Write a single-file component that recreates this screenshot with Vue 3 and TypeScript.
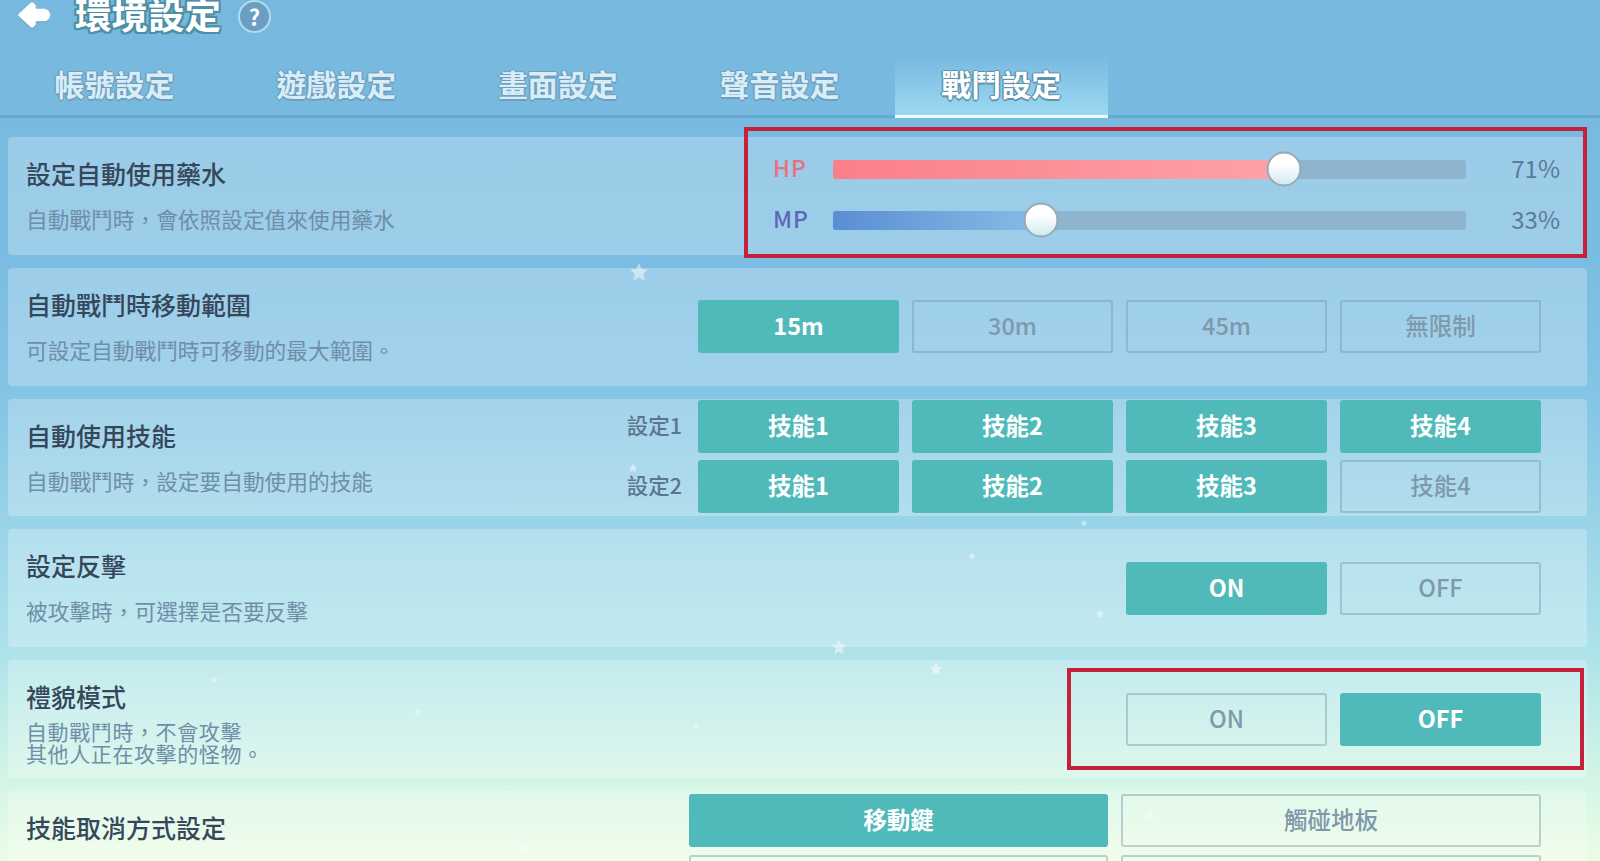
<script setup lang="ts">
const tabs = ['帳號設定', '遊戲設定', '畫面設定', '聲音設定', '戰鬥設定']
const ranges = ['15m', '30m', '45m', '無限制']
const skillSets = [
  { label: '設定1', on: [true, true, true, true] },
  { label: '設定2', on: [true, true, true, false] },
]
const sliders = [
  { key: 'hp', name: 'HP', value: 71, pos: 71.2 },
  { key: 'mp', name: 'MP', value: 33, pos: 32.9 },
]
const stars = [
  { x: 639, y: 272, s: 20, o: 0.5 },
  { x: 839, y: 647, s: 16, o: 0.5 },
  { x: 936, y: 669, s: 14, o: 0.5 },
  { x: 633, y: 468, s: 10, o: 0.5 },
  { x: 972, y: 556, s: 8, o: 0.5 },
  { x: 1100, y: 614, s: 10, o: 0.45 },
  { x: 1084, y: 523, s: 7, o: 0.5 },
  { x: 214, y: 680, s: 9, o: 0.4 },
  { x: 418, y: 712, s: 9, o: 0.4 },
  { x: 696, y: 726, s: 7, o: 0.35 },
  { x: 525, y: 848, s: 12, o: 0.4 },
  { x: 1150, y: 815, s: 14, o: 0.3 },
]
</script>

<template>
  <div class="page">
    <header class="top">
      <div class="title-row">
        <svg class="back" viewBox="0 0 34 30" aria-hidden="true">
          <path
            d="M15 4 L3 15 L15 26 L17 24 V19.5 H27 Q31 19 31.5 15 Q31 11 27 10.5 H17 V6 Z"
            fill="#fff"
            stroke="#fff"
            stroke-width="3.5"
            stroke-linejoin="round"
          />
        </svg>
        <h1 class="title">環境設定</h1>
        <span class="help">?</span>
      </div>
      <nav class="tabs">
        <div v-for="(t, i) in tabs" :key="t" class="tab" :class="{ active: i === 4 }">{{ t }}</div>
      </nav>
    </header>

    <main class="rows">
      <section class="row slider-row">
        <div class="text">
          <div class="name">設定自動使用藥水</div>
          <div class="desc">自動戰鬥時&#xFF0C;會依照設定值來使用藥水</div>
        </div>
        <div class="sliders">
          <div v-for="s in sliders" :key="s.key" class="slider" :class="s.key">
            <span class="s-name">{{ s.name }}</span>
            <div class="track">
              <div class="fill" :style="{ width: s.pos + '%' }"></div>
              <div class="thumb" :style="{ left: s.pos + '%' }"></div>
            </div>
            <span class="s-val">{{ s.value }}%</span>
          </div>
        </div>
      </section>

      <section class="row">
        <div class="text">
          <div class="name">自動戰鬥時移動範圍</div>
          <div class="desc">可設定自動戰鬥時可移動的最大範圍。</div>
        </div>
        <div class="grid">
          <button v-for="(r, i) in ranges" :key="r" class="btn" :class="{ on: i === 0 }">{{ r }}</button>
        </div>
      </section>

      <section class="row">
        <div class="text">
          <div class="name">自動使用技能</div>
          <div class="desc">自動戰鬥時&#xFF0C;設定要自動使用的技能</div>
        </div>
        <div class="skill-sets">
          <div v-for="set in skillSets" :key="set.label" class="skill-line">
            <span class="set-label">{{ set.label }}</span>
            <div class="grid">
              <button v-for="(on, i) in set.on" :key="i" class="btn" :class="{ on }">技能{{ i + 1 }}</button>
            </div>
          </div>
        </div>
      </section>

      <section class="row">
        <div class="text">
          <div class="name">設定反擊</div>
          <div class="desc">被攻擊時&#xFF0C;可選擇是否要反擊</div>
        </div>
        <div class="grid two">
          <button class="btn on">ON</button>
          <button class="btn">OFF</button>
        </div>
      </section>

      <section class="row">
        <div class="text">
          <div class="name">禮貌模式</div>
          <div class="desc tight">自動戰鬥時&#xFF0C;不會攻擊<br />其他人正在攻擊的怪物。</div>
        </div>
        <div class="grid two">
          <button class="btn">ON</button>
          <button class="btn on">OFF</button>
        </div>
      </section>

      <section class="row cancel-row">
        <div class="text">
          <div class="name">技能取消方式設定</div>
        </div>
        <div class="wide-grid">
          <button class="btn on">移動鍵</button>
          <button class="btn">觸碰地板</button>
          <button class="btn"></button>
          <button class="btn"></button>
        </div>
      </section>
    </main>

    <svg
      v-for="(st, i) in stars"
      :key="i"
      class="star"
      viewBox="0 0 20 20"
      :style="{ left: st.x + 'px', top: st.y + 'px', width: st.s + 'px', height: st.s + 'px', opacity: st.o }"
      aria-hidden="true"
    >
      <path d="M10 1 L12.6 7 L19 7.6 L14.2 12 L15.6 18.6 L10 15.2 L4.4 18.6 L5.8 12 L1 7.6 L7.4 7 Z" fill="#fff" />
    </svg>

    <div class="mark mark-a"></div>
    <div class="mark mark-b"></div>
  </div>
</template>

<style>
html,
body {
  margin: 0;
  background: #77b8df;
}
</style>

<style scoped>
.page {
  position: relative;
  width: 1600px;
  height: 861px;
  overflow: hidden;
  font-family: "Noto Sans CJK TC", "Noto Sans", sans-serif;
  background: linear-gradient(
    180deg,
    #77b8df 0%,
    #7bbce2 30%,
    #85c5e5 47%,
    #9bd5e8 62%,
    #aee3ea 76%,
    #d2f5e6 90%,
    #ecfce4 100%
  );
}

.top {
  height: 118px;
  box-sizing: border-box;
  border-bottom: 3px solid #66abd3;
}

.title-row {
  display: flex;
  align-items: center;
  height: 30px;
  margin-bottom: 26px;
  padding-left: 17px;
}

.back {
  width: 34px;
  height: 30px;
  margin-right: 24px;
  filter: drop-shadow(0 1px 0 #6a9dbb);
}

.title {
  margin: -2px 0 0;
  font-size: 36.5px;
  line-height: 30px;
  font-weight: 700;
  color: #fff;
  text-shadow:
    2px 0 0 #4f8fa5,
    -2px 0 0 #4f8fa5,
    0 2px 0 #4f8fa5,
    0 -2px 0 #4f8fa5,
    2px 2px 0 #4f8fa5,
    -2px 2px 0 #4f8fa5,
    2px -2px 0 #4f8fa5,
    -2px -2px 0 #4f8fa5;
}

.help {
  box-sizing: border-box;
  width: 33px;
  height: 33px;
  margin: 3px 0 0 17px;
  border-radius: 50%;
  border: 2px solid #b4d9ec;
  background: #6a9fc2;
  color: #fff;
  font-size: 22px;
  font-weight: 700;
  line-height: 28px;
  text-align: center;
}

.tabs {
  display: flex;
  gap: 8.7px;
  padding-left: 8px;
}

.tab {
  width: 213px;
  height: 59px;
  box-sizing: border-box;
  padding-top: 6px;
  text-align: center;
  font-size: 30px;
  line-height: 42px;
  font-weight: 700;
  color: #d8edf7;
  text-shadow:
    1.5px 0 0 #6f9fbd,
    -1.5px 0 0 #6f9fbd,
    0 1.5px 0 #6f9fbd,
    0 -1.5px 0 #6f9fbd;
}

.tab.active {
  height: 62px;
  color: #fff;
  background: linear-gradient(180deg, rgba(150, 214, 240, 0) 0%, #9cd8f0 100%);
  border-bottom: 3px solid #eefaff;
  text-shadow:
    1.5px 0 0 #5d93ad,
    -1.5px 0 0 #5d93ad,
    0 1.5px 0 #5d93ad,
    0 -1.5px 0 #5d93ad;
}

.rows {
  display: flex;
  flex-direction: column;
  gap: 13px;
  padding: 19px 13px 0 8px;
}

.row {
  display: flex;
  align-items: center;
  justify-content: space-between;
  flex: none;
  height: 117.8px;
  box-sizing: border-box;
  padding: 0 46px 0 18px;
  border-radius: 4px;
  background: rgba(255, 255, 255, 0.25);
}

.text {
  align-self: stretch;
  padding-top: 21px;
}

.name {
  font-size: 25px;
  line-height: 30px;
  font-weight: 500;
  color: #36475a;
}

.desc {
  margin-top: 20px;
  font-size: 21.7px;
  line-height: 21px;
  color: #6f8ea8;
}

.desc.tight {
  margin-top: 9px;
  font-size: 21px;
  line-height: 22px;
  letter-spacing: 0.6px;
}

.grid {
  display: grid;
  grid-template-columns: repeat(4, 201px);
  gap: 13px;
}

.grid.two {
  grid-template-columns: repeat(2, 201px);
}

.btn {
  height: 53px;
  padding: 0 0 3px;
  box-sizing: border-box;
  border: 2px solid rgba(120, 145, 165, 0.42);
  border-radius: 3px;
  background: transparent;
  font-family: inherit;
  font-size: 23.5px;
  font-weight: 500;
  color: #7f99aa;
}

.btn.on {
  border-color: #4fbab9;
  background: #4fbab9;
  color: #fff;
  font-weight: 700;
}

.slider-row {
  padding-right: 27px;
}

.sliders {
  display: flex;
  flex-direction: column;
  gap: 25px;
  margin-bottom: 6px;
}

.slider {
  display: grid;
  grid-template-columns: 60px 633px 94px;
  align-items: center;
  height: 26px;
}

.s-name {
  margin-bottom: 4px;
  font-size: 23px;
  line-height: 26px;
  font-weight: 500;
  letter-spacing: 1px;
}

.hp .s-name {
  color: #e8717f;
}

.mp .s-name {
  color: #5a68b8;
}

.track {
  position: relative;
  height: 19px;
  border-radius: 3px;
  background: #8fb4cd;
}

.fill {
  height: 100%;
  border-radius: 3px 0 0 3px;
}

.hp .fill {
  background: linear-gradient(90deg, #fb7f8a, #fda2a9);
}

.mp .fill {
  background: linear-gradient(90deg, #5a8ed4, #86bde4);
}

.thumb {
  position: absolute;
  top: 50%;
  width: 35px;
  height: 35px;
  box-sizing: border-box;
  border: 2px solid #9aa9b3;
  border-radius: 50%;
  transform: translate(-50%, -50%);
  background: linear-gradient(180deg, #ffffff 35%, #cfeaf0 100%);
}

.s-val {
  margin-bottom: 3px;
  text-align: right;
  font-size: 24px;
  line-height: 24px;
  color: #5b7998;
}

.skill-sets {
  display: flex;
  flex-direction: column;
  gap: 7px;
  margin-bottom: 2px;
}

.skill-line {
  display: flex;
  align-items: center;
  gap: 16px;
}

.set-label {
  padding-bottom: 3px;
  font-size: 21.5px;
  line-height: 30px;
  font-weight: 500;
  color: #5c7590;
}

.cancel-row {
  align-items: flex-start;
  height: 130px;
}

.wide-grid {
  display: grid;
  grid-template-columns: 419px 420px;
  gap: 8px 13px;
  margin-top: 3px;
}

.star {
  position: absolute;
  pointer-events: none;
  transform: translate(-50%, -50%);
  filter: blur(0.6px);
}

.mark {
  position: absolute;
  box-sizing: border-box;
  border: 4px solid #c4223a;
  pointer-events: none;
}

.mark-a {
  left: 744px;
  top: 127px;
  width: 843px;
  height: 131px;
}

.mark-b {
  left: 1067px;
  top: 668px;
  width: 517px;
  height: 102px;
}
</style>
